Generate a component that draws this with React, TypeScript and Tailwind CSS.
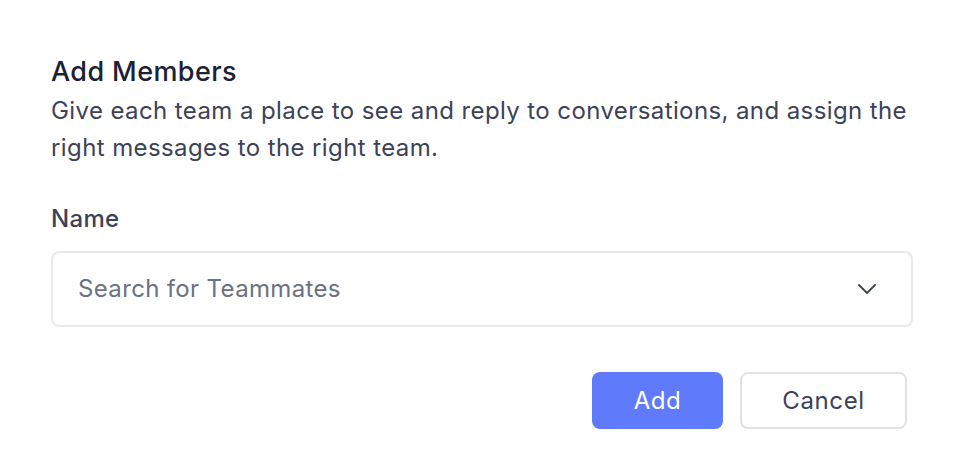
import React from "react";

export default function App() {
  return (
    <div className="w-[962px] h-[460px] bg-white" style={{ fontFamily: "Inter, 'Noto Sans', sans-serif" }}>
      <div className="pl-[51px] pr-[49px] pt-[56px]">
        <h1 className="text-[27px] leading-[32px] font-medium tracking-[0.4px] text-[#1c2133]">Add Members</h1>
        <p className="mt-[4px] text-[24px] leading-[37px] text-[#3c4257] tracking-[0.4px]">
          Give each team a place to see and reply to conversations, and assign the right messages to the right team.
        </p>
        <div className="mt-[38px] text-[24px] leading-[30px] font-medium tracking-[0.3px] text-[#3c4257]">Name</div>
        <div className="mt-[17px] h-[76px] rounded-[8px] border-2 border-[#e8e9ec] flex items-center pl-[25px] pr-[35px]">
          <span className="flex-1 text-[24px] tracking-[0.35px] text-[#6b7280]">Search for Teammates</span>
          <svg width="18" height="10" viewBox="0 0 18 10" fill="none">
            <path d="M1 1l8 8 8-8" stroke="#3c4257" strokeWidth="1.8" strokeLinecap="round" strokeLinejoin="round" />
          </svg>
        </div>
        <div className="mt-[45px] flex justify-end gap-[17px] pr-[6px]">
          <button className="w-[131px] h-[57px] rounded-[8px] bg-[#5f7bfc] text-white text-[24px] font-normal tracking-[0.5px]">Add</button>
          <button className="w-[167px] h-[57px] rounded-[8px] border-2 border-[#e1e2e6] bg-white text-[#3c4257] text-[24px] font-normal tracking-[0.6px]">Cancel</button>
        </div>
      </div>
    </div>
  );
}
